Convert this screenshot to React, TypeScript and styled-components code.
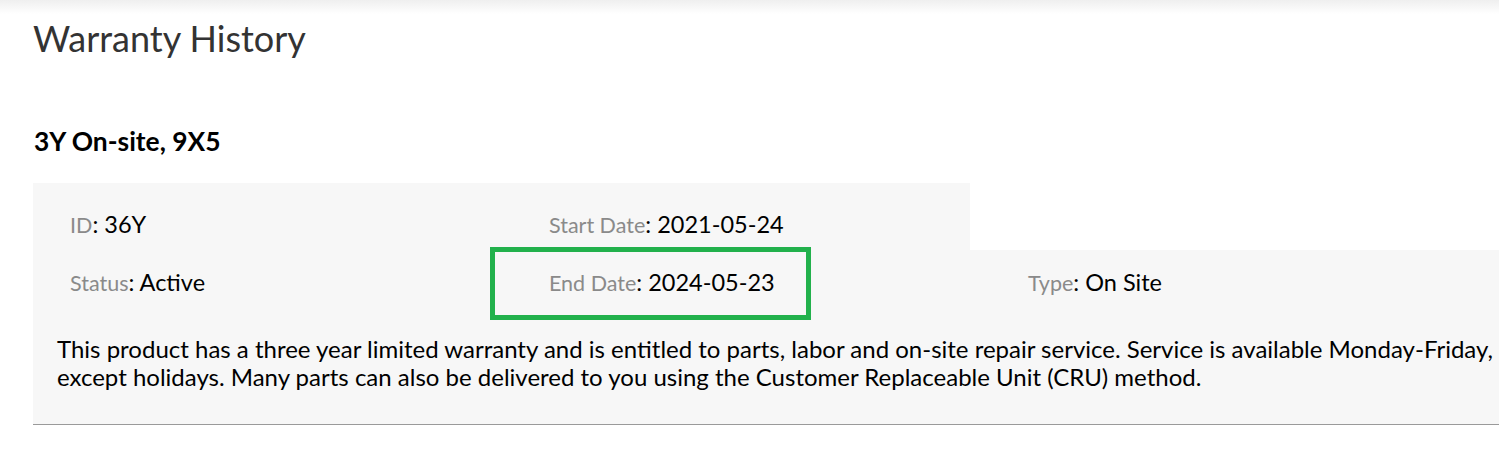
import React from "react";
import styled, { createGlobalStyle } from "styled-components";

const GlobalStyle = createGlobalStyle`
  html, body {
    margin: 0;
    padding: 0;
    background: #ffffff;
    overflow: hidden;
  }
  body {
    font-family: Lato, "Open Sans", Arial, sans-serif;
  }
`;

const Shade = styled.div`
  height: 14px;
  background: linear-gradient(to bottom, #efefef, #ffffff);
`;

const Page = styled.div`
  padding-left: 33px;
  width: 1600px;
`;

const Title = styled.h1`
  margin: 2px 0 0 0;
  font-size: 36px;
  font-weight: 400;
  line-height: 44px;
  color: #333333;
`;

const Plan = styled.h2`
  margin: 65px 0 0 1px;
  font-size: 26.4px;
  font-weight: 700;
  line-height: 32px;
  color: #000000;
`;

const TopRow = styled.div`
  margin-top: 26px;
  width: 937px;
  height: 67px;
  box-sizing: border-box;
  padding-top: 27px;
  background: #f7f7f7;
  display: grid;
  grid-template-columns: 479px 1fr;
`;

const Body = styled.div`
  background: #f7f7f7;
  border-bottom: 1px solid #9a9a9a;
  padding-bottom: 33px;
`;

const Row = styled.div`
  display: grid;
  grid-template-columns: 479px 479px 479px;
  height: 66px;
  box-sizing: border-box;
  padding-top: 18px;
`;

const Cell = styled.div`
  position: relative;
  padding-left: 37px;
  font-size: 23.5px;
  line-height: 28px;
`;

const Label = styled.span`
  font-size: 21.5px;
  color: #8a8a8a;
`;

const Value = styled.span`
  font-size: 23.5px;
  color: #000000;
`;

const Highlight = styled.div`
  position: absolute;
  left: -22px;
  top: -21px;
  width: 321px;
  height: 73px;
  box-sizing: border-box;
  border: 5px solid #22b14c;
`;

const Note = styled.p`
  margin: 19px 0 0 24px;
  width: 1450px;
  font-size: 24px;
  line-height: 28px;
  color: #000000;
`;

type FieldProps = { label: string; value: string; marked?: boolean };

const Field = ({ label, value, marked }: FieldProps) => (
  <Cell>
    {marked && <Highlight />}
    <Label>{label}</Label>
    <Value>: {value}</Value>
  </Cell>
);

const App = () => {
  return (
    <>
      <GlobalStyle />
      <Shade />
      <Page>
        <Title>Warranty History</Title>
        <Plan>3Y On-site, 9X5</Plan>
        <TopRow>
          <Field label="ID" value="36Y" />
          <Field label="Start Date" value="2021-05-24" />
        </TopRow>
        <Body>
          <Row>
            <Field label="Status" value="Active" />
            <Field label="End Date" value="2024-05-23" marked />
            <Field label="Type" value="On Site" />
          </Row>
          <Note>
            This product has a three year limited warranty and is entitled to
            parts, labor and on-site repair service. Service is available
            Monday-Friday, except holidays. Many parts can also be delivered to
            you using the Customer Replaceable Unit (CRU) method.
          </Note>
        </Body>
      </Page>
    </>
  );
};

export default App;
